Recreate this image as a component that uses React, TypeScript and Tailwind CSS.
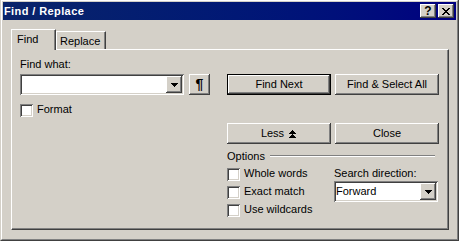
import type { ReactNode } from "react";

const raised =
  "shadow-[inset_-1px_-1px_0_#404040,inset_1px_1px_0_#ffffff,inset_-2px_-2px_0_#808080]";
const sunken =
  "shadow-[inset_1px_1px_0_#808080,inset_-1px_-1px_0_#ffffff,inset_2px_2px_0_#404040,inset_-2px_-2px_0_#d4d0c8]";

function DownArrow() {
  return (
    <svg width="7" height="4" viewBox="0 0 7 4" shapeRendering="crispEdges">
      <rect x="0" y="0" width="7" height="1" />
      <rect x="1" y="1" width="5" height="1" />
      <rect x="2" y="2" width="3" height="1" />
      <rect x="3" y="3" width="1" height="1" />
    </svg>
  );
}

function DropButton() {
  return (
    <div className={`w-4 h-[17px] shrink-0 flex items-center justify-center bg-[#d4d0c8] ${raised}`}>
      <DownArrow />
    </div>
  );
}

function Check({ label }: { label: string }) {
  return (
    <div className="flex items-start h-[18px]">
      <span className={`mt-px w-[13px] h-[13px] shrink-0 bg-white ${sunken}`} />
      <span className="ml-[4px]">{label}</span>
    </div>
  );
}

function Btn({ children, def }: { children: ReactNode; def?: boolean }) {
  return (
    <button
      className={`w-[104px] h-[21px] flex items-center justify-center bg-[#d4d0c8] ${
        def ? "border border-black" : ""
      } ${raised}`}
    >
      {children}
    </button>
  );
}

export default function App() {
  return (
    <div className="w-[459px] h-[241px] overflow-hidden bg-[#d4d0c8] border-l border-r border-b border-l-[#d4d0c8] border-r-[#404040] border-b-[#404040] font-['Liberation_Sans',Arial,sans-serif] text-[11px] leading-[13px] text-black">
      <div className="h-full flex flex-col p-px border border-t-white border-l-white border-r-[#808080] border-b-[#808080]">
        {/* Title bar */}
        <div className="h-[18px] shrink-0 flex items-center pl-px pr-[2px] bg-linear-to-r from-[#0a246a] to-[#000080]">
          <span className="flex-1 text-white font-bold tracking-[0.4px] leading-[18px]">Find / Replace</span>
          <div className={`w-4 h-[14px] flex items-center justify-center bg-[#d4d0c8] font-bold text-[12px] leading-[14px] ${raised}`}>
            ?
          </div>
          <div className={`ml-[2px] w-4 h-[14px] flex items-center justify-center bg-[#d4d0c8] ${raised}`}>
            <svg width="8" height="7" viewBox="0 0 8 7" shapeRendering="crispEdges">
              <path d="M0 0h2v1h1v1h2V1h1V0h2v1H7v1H6v1H5v1h1v1h1v1h1v1H6V6H5V5H3v1H2v1H0V6h1V5h1V4h1V3H2V2H1V1H0z" />
            </svg>
          </div>
        </div>

        {/* Body */}
        <div className="flex-1 flex flex-col pl-[8px] pr-[7px] pt-[9px] pb-[8px]">
          {/* Tabs */}
          <div className="h-[20px] shrink-0 flex items-end">
            <div className="relative z-10 -mb-px w-[45px] h-[21px] pl-[5px] pt-[3px] bg-[#d4d0c8] border-t border-l border-r border-t-white border-l-white border-r-[#404040] shadow-[inset_-1px_0_0_#808080]">
              Find
            </div>
            <div className="w-[50px] h-[18px] pl-[3px] pt-[3px] bg-[#d4d0c8] border-t border-l border-r border-t-white border-l-white border-r-[#404040] shadow-[inset_-1px_0_0_#808080]">
              Replace
            </div>
          </div>

          {/* Panel */}
          <div className="flex-1 flex pl-[8px] border border-t-white border-l-white border-r-[#404040] border-b-[#404040] shadow-[inset_-1px_-1px_0_#808080]">
            {/* Left column */}
            <div className="w-[190px] pt-[8px]">
              <div>Find what:</div>
              <div className="mt-[3px] flex">
                <div className={`w-[164px] h-[21px] p-[2px] flex justify-end bg-white ${sunken}`}>
                  <DropButton />
                </div>
                <button className={`ml-[5px] w-[21px] h-[21px] flex items-center justify-center bg-[#d4d0c8] font-bold text-[14px] ${raised}`}>
                  ¶
                </button>
              </div>
              <div className="mt-[8px]">
                <Check label="Format" />
              </div>
            </div>

            {/* Right column */}
            <div className="ml-[17px] w-[212px] pt-[24px]">
              <div className="flex gap-[4px]">
                <Btn def>Find Next</Btn>
                <Btn>Find &amp; Select All</Btn>
              </div>
              <div className="mt-[28px] flex gap-[4px]">
                <Btn>
                  <span>Less</span>
                  <svg className="ml-[4px]" width="9" height="8" viewBox="0 0 9 8" shapeRendering="crispEdges">
                    <path d="M4 0h1v1h1v1h1v1h1v1H1V3h1V2h1V1h1z" />
                    <path d="M4 4h1v1h1v1h1v1h1v1H1V7h1V6h1V5h1z" />
                  </svg>
                </Btn>
                <Btn>Close</Btn>
              </div>

              {/* Options */}
              <div className="mt-[6px] flex items-start">
                <span>Options</span>
                <div className="ml-[5px] mr-[4px] mt-[5px] flex-1 h-[2px] border-t border-b border-t-[#808080] border-b-white" />
              </div>
              <div className="mt-[4px] flex">
                <div className="w-[107px]">
                  <Check label="Whole words" />
                  <Check label="Exact match" />
                  <Check label="Use wildcards" />
                </div>
                <div>
                  <div>Search direction:</div>
                  <div className={`mt-px w-[104px] h-[21px] p-[2px] flex items-center bg-white ${sunken}`}>
                    <span className="flex-1">Forward</span>
                    <DropButton />
                  </div>
                </div>
              </div>
            </div>
          </div>
        </div>
      </div>
    </div>
  );
}
